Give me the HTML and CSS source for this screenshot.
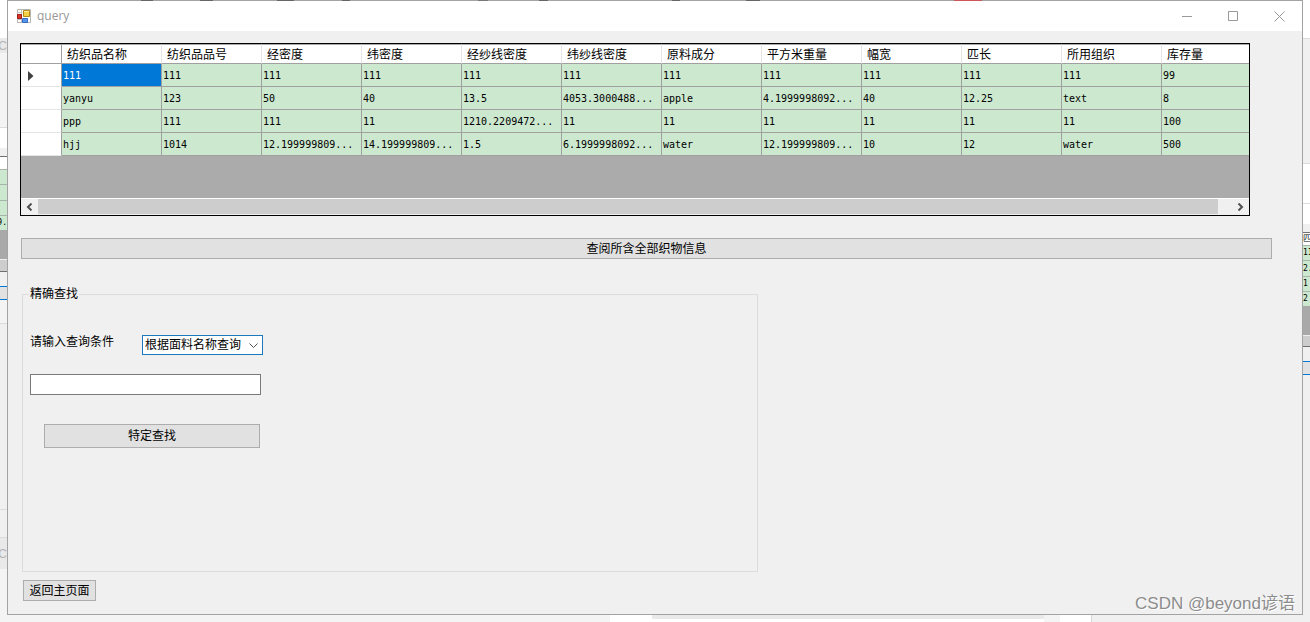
FILE: index.html
```html
<!DOCTYPE html>
<html lang="zh-CN">
<head>
<meta charset="utf-8">
<title>query</title>
<link rel="stylesheet" href="styles.css">
</head>
<body>
<div class="desktop">
  <div class="sliver sliver-left">
    <div class="white"></div><div class="tab"><span>SC</span></div><div class="pale"></div><div class="white line-top"></div><div class="face"></div>
    <div class="white dark-top"></div><div class="green"></div><div class="green"></div><div class="green"></div><div class="green end"><span>9.</span></div>
    <div class="gray"></div><div class="thumb"></div><div class="face dark-top"></div><div class="blue"></div><div class="pale"></div><div class="face line-top"></div><div class="face line-top"></div><div class="tab line-top"><span>SC</span></div><div class="pale"></div>
  </div>

  <main class="window">
    <div class="peek"></div>
    <header class="titlebar">
      <svg class="app-icon" width="14" height="14" viewBox="0 0 14 14">
        <path d="M.5.5h13v13H.5z" fill="#fff" stroke="#b5b5b5"/>
        <path d="M4.5.5v13M.5 3.5h5M.5 10.5h5" stroke="#c4c4c4"/>
        <path d="M.5 5.5h4v4h-4z" fill="#d8382c" stroke="#a01c14"/>
        <path d="M6.500 1.500h6v6h-6z" fill="#f7cf45" stroke="#b88712"/>
        <path d="M7 2h5v1H7z" fill="#fff0a5"/>
        <path d="M5.500 9.500h5v4h-5z" fill="#5795ed" stroke="#316bc1"/>
      </svg>
      <span class="title">query</span>
      <button class="caption" aria-label="最小化"><svg width="11" height="11"><path d="M0 5.500h10"/></svg></button>
      <button class="caption" aria-label="最大化"><svg width="11" height="11"><path d="M.5.5h9v9h-9z"/></svg></button>
      <button class="caption" aria-label="关闭"><svg width="11" height="11"><path d="M.5.5l10 10M10.500.5l-10 10"/></svg></button>
    </header>

    <div class="client">
      <div class="grid-view">
        <table>
          <colgroup><col class="col-head"><col><col><col><col><col><col><col><col><col><col><col><col></colgroup>
          <thead>
            <tr><th class="corner"></th><th>纺织品名称</th><th>纺织品品号</th><th>经密度</th><th>纬密度</th><th>经纱线密度</th><th>纬纱线密度</th><th>原料成分</th><th>平方米重量</th><th>幅宽</th><th>匹长</th><th>所用组织</th><th>库存量</th></tr>
          </thead>
          <tbody>
            <tr><td class="row-head"><svg width="6" height="10" viewBox="0 0 6 10"><path d="M0 0l5.500 5L0 10z" fill="#404040"/></svg></td><td class="selected">111</td><td>111</td><td>111</td><td>111</td><td>111</td><td>111</td><td>111</td><td>111</td><td>111</td><td>111</td><td>111</td><td>99</td></tr>
            <tr><td class="row-head"></td><td>yanyu</td><td>123</td><td>50</td><td>40</td><td>13.5</td><td>4053.3000488...</td><td>apple</td><td>4.1999998092...</td><td>40</td><td>12.25</td><td>text</td><td>8</td></tr>
            <tr><td class="row-head"></td><td>ppp</td><td>111</td><td>111</td><td>11</td><td>1210.2209472...</td><td>11</td><td>11</td><td>11</td><td>11</td><td>11</td><td>11</td><td>100</td></tr>
            <tr><td class="row-head"></td><td>hjj</td><td>1014</td><td>12.199999809...</td><td>14.199999809...</td><td>1.5</td><td>6.1999998092...</td><td>water</td><td>12.199999809...</td><td>10</td><td>12</td><td>water</td><td>500</td></tr>
          </tbody>
        </table>
        <div class="scrollbar">
          <button aria-label="向左滚动"><svg width="7" height="8"><path d="M5.500.5L2 4l3.500 3.500"/></svg></button>
          <div class="scroll-thumb"></div>
          <button class="scroll-right" aria-label="向右滚动"><svg width="7" height="8"><path d="M1.500.5L5 4 1.500 7.500"/></svg></button>
        </div>
      </div>

      <button class="btn show-all">查阅所含全部织物信息</button>

      <fieldset class="group">
        <legend>精确查找</legend>
        <div class="criteria">
          <label for="criterion">请输入查询条件</label>
          <div class="combo">
            <select id="criterion"><option>根据面料名称查询</option></select>
            <svg width="9" height="6"><path d="M.5.5l4 4 4-4"/></svg>
          </div>
        </div>
        <input class="keyword" type="text" aria-label="查询内容">
        <button class="btn find">特定查找</button>
      </fieldset>

      <button class="btn back">返回主页面</button>
    </div>
    <div class="watermark">CSDN @beyond谚语</div>
  </main>

  <div class="sliver sliver-right">
    <div class="white"></div><div class="face line-top"></div><div class="white line-top"></div><div class="white line-top"></div><div class="face"></div>
    <div class="white dark-top"><span>匹</span></div><div class="green"><span>11</span></div><div class="green"><span>2.2</span></div><div class="green"><span>1</span></div><div class="green"><span>2</span></div>
    <div class="gray"></div><div class="thumb"></div><div class="face dark-top"></div><div class="blue"></div><div class="face"></div>
  </div>

  <div class="bottom">
    <div class="pale"></div><div class="white"></div><div class="strip"></div><div class="pale"></div><div class="white"></div><div class="face edge"></div>
  </div>
</div>
</body>
</html>
```
FILE: styles.css
```css
* {
  box-sizing: border-box;
}

body {
  margin: 0;
  background: #f4f4f4;
  color: #000;
  font: 12px/16px "Liberation Sans", "Noto Sans CJK SC", sans-serif;
}

button,
input,
select {
  margin: 0;
  padding: 0;
  border-radius: 0;
  color: inherit;
  font: inherit;
}

svg {
  display: block;
  fill: none;
}

.desktop {
  display: grid;
  grid-template: 1fr 7px / 7px minmax(0, 1fr) 7px;
  min-height: 100vh;
}

/* Windows showing behind the dialog */
.sliver {
  display: grid;
  overflow: hidden;
}

.sliver > div {
  display: flex;
  align-items: center;
  overflow: hidden;
  font: 8px/10px "DejaVu Sans Mono", "Noto Sans CJK SC", monospace;
}

.sliver-left {
  grid-template-rows: 38px 15px 74px 21px 8px 13px 15px 16px 15px 15px 29px 12px 15px 14px 23px 186px 28px 32px 1fr;
}

.sliver-right {
  grid-template-rows: 38px 125px 40px 21px 8px 13px 15px 16px 15px 15px 29px 11px 15px 14px 1fr;
}

.sliver > .tab {
  justify-content: flex-end;
  background: #e9e9e9;
  color: #b5b5b5;
  font: 12px/14px "Liberation Sans", sans-serif;
}

.sliver > .end {
  justify-content: flex-end;
}

.white { background: #fff; }
.pale { background: #f4f4f4; }
.face { background: #f0f0f0; }
.gray { background: #a9a9a9; }
.line-top { border-top: 1px solid #dcdcdc; }
.dark-top { border-top: 1px solid #707070; }

.green {
  border-top: 1px solid #a9b5aa;
  background: #cce8cf;
}

.thumb {
  border-top: 1px solid #eee;
  background: #cdcdcd;
}

.blue {
  border: solid #0078d7;
  border-width: 1px 0;
  background: #e1e1e1;
}

.bottom {
  display: grid;
  grid-column: 1 / -1;
  grid-template-columns: 610fr 42fr 392fr 16fr 31fr 219fr;
}

.strip {
  border-bottom: 3px solid #fff;
  background: #e9e9e9;
}

.edge {
  border-left: 1px solid #d5d5d5;
}

/* Dialog */
.window {
  position: relative;
  border: 1px solid #a3a3a3;
  background: #f0f0f0;
}

.peek {
  position: absolute;
  top: -1px;
  right: 0;
  left: 0;
  height: 1px;
  background: linear-gradient(90deg, transparent 133px, #666 133px 145px, transparent 145px 192px, #666 192px 205px, transparent 205px 269px, #666 269px 286px, transparent 286px 334px, #666 334px 342px, transparent 342px 470px, #777 470px 480px, transparent 480px 531px, #666 531px 540px, transparent 540px 664px, #666 664px 672px, transparent 672px 738px, #666 738px 752px, transparent 752px 946px, #c55 946px 974px, transparent 974px);
}

.titlebar {
  display: flex;
  align-items: center;
  height: 30px;
  padding-left: 9px;
  background: #fff;
}

.title {
  margin: 0 auto 0 6px;
  color: #999;
  font: 12px/16px "Open Sans", sans-serif;
}

.caption {
  display: grid;
  place-items: center;
  width: 46px;
  height: 28px;
  border: 0;
  background: none;
  stroke: #999;
}

.client {
  display: flex;
  flex-direction: column;
  align-items: flex-start;
  padding: 12px 30px 13px 12px;
}

.grid-view {
  display: flex;
  flex-direction: column;
  justify-content: space-between;
  align-self: stretch;
  min-height: 173px;
  margin-right: 22px;
  overflow: hidden;
  border: 1px solid #000;
  background: #ababab;
}

table {
  width: 1241px;
  border-spacing: 0;
  table-layout: fixed;
}

col {
  width: 100px;
}

.col-head {
  width: 41px;
}

th,
td {
  overflow: hidden;
  border: solid #a0a0a0;
  border-width: 0 1px 1px 0;
  text-align: left;
  white-space: nowrap;
}

th {
  height: 20px;
  padding: 2px 0 0 5px;
  border-top: 1px solid #a9a9a9;
  border-right-color: #e5e5e5;
  background: #fff;
  font-weight: 400;
}

td {
  height: 23px;
  padding: 2px 0 0 1px;
  background: #cce8cf;
  font: 10px/16px "DejaVu Sans Mono", monospace;
}

.corner {
  border-right-color: #a0a0a0;
}

.row-head {
  padding-left: 7px;
  border-bottom-color: #e5e5e5;
  background: #fff;
}

.row-head,
.corner {
  border-right-color: #a0a0a0;
}

.selected {
  background: #0078d7;
  color: #fff;
}

.scrollbar {
  display: flex;
  height: 17px;
  padding-bottom: 1px;
  border-top: 1px solid #fff;
  background: #f0f0f0;
}

.scrollbar button {
  display: grid;
  place-items: center;
  width: 17px;
  border: 0;
  background: none;
  stroke: #505050;
  stroke-width: 2;
}

.scroll-thumb {
  flex: 1;
  margin-right: 14px;
  background: #cdcdcd;
}

.btn {
  border: 1px solid #adadad;
  background: #e1e1e1;
}

.show-all {
  align-self: stretch;
  height: 21px;
  margin: 22px 0 0 1px;
}

.group {
  display: flex;
  flex-direction: column;
  align-items: flex-start;
  width: 736px;
  max-width: 100%;
  min-height: 286px;
  margin: 27px 0 8px 2px;
  padding: 32px 7px 0;
  border: 1px solid #dcdcdc;
}

legend {
  margin-left: -1px;
  padding: 0 1px;
}

.criteria {
  display: flex;
  gap: 28px;
}

.combo {
  position: relative;
  width: 121px;
  margin-top: 1px;
}

.combo select {
  display: block;
  width: 100%;
  height: 20px;
  padding-left: 2px;
  border: 1px solid #1c79c0;
  background: #fff;
  appearance: none;
}

.combo svg {
  position: absolute;
  top: 8px;
  right: 5px;
  stroke: #505050;
  pointer-events: none;
}

.keyword {
  width: 231px;
  height: 21px;
  margin-top: 19px;
  border: 1px solid #7a7a7a;
  background: #fff;
}

.find {
  width: 216px;
  height: 24px;
  margin: 29px 0 0 14px;
}

.back {
  width: 73px;
  height: 21px;
  margin-left: 3px;
}

.watermark {
  position: absolute;
  right: 7px;
  bottom: -2px;
  color: #8c8c8c;
  font: 17px/24px "Liberation Sans", "Noto Sans CJK SC", sans-serif;
  text-shadow: 1px 1px #fff;
}
```
